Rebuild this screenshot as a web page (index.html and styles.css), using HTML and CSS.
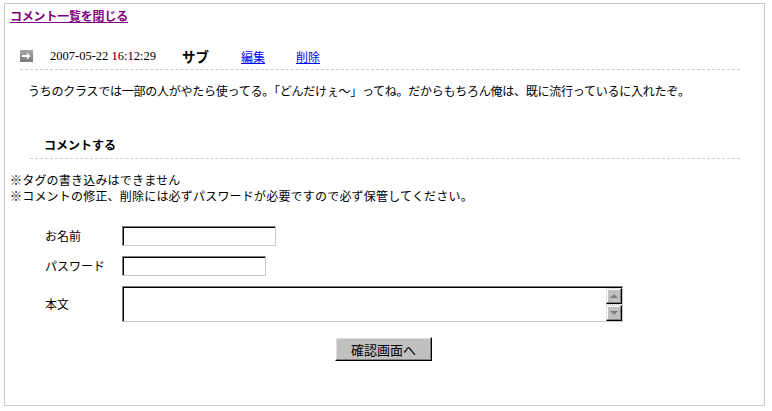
FILE: index.html
```html
<!DOCTYPE html>
<html lang="ja">
<head>
<meta charset="utf-8">
<title>コメント</title>
<link rel="stylesheet" href="styles.css">
</head>
<body>
<div class="frame">
  <div class="close"><a href="#" class="close-link">コメント一覧を閉じる</a></div>

  <div class="entry">
    <div class="entry-head">
      <svg class="icon" width="13" height="12" viewBox="0 0 13 12">
        <defs>
          <linearGradient id="g" x1="0" y1="0" x2="0" y2="1">
            <stop offset="0" stop-color="#a8a8a8"/>
            <stop offset="1" stop-color="#7a7a7a"/>
          </linearGradient>
        </defs>
        <rect x="0" y="0" width="13" height="12" fill="url(#g)"/>
        <path d="M2 5 H7 V2.5 L10.5 6 L7 9.5 V7 H2 Z" fill="#fff"/>
      </svg>
      <span class="date">2007-05-22 16:12:29</span>
      <span class="name">サブ</span>
      <a href="#" class="act">編集</a>
      <a href="#" class="act">削除</a>
    </div>
    <div class="entry-body">うちのクラスでは一部の人がやたら使ってる。「どんだけぇ〜」ってね。だからもちろん俺は、既に流行っているに入れたぞ。</div>
  </div>

  <div class="comment-sec">
    <div class="comment-title">コメントする</div>
  </div>

  <div class="notes">
    <div>※タグの書き込みはできません</div>
    <div>※コメントの修正、削除には必ずパスワードが必要ですので必ず保管してください。</div>
  </div>

  <form class="form">
    <div class="grid">
      <label class="lbl" for="n">お名前</label>
      <input id="n" class="txt txt-name" type="text">
      <label class="lbl" for="p">パスワード</label>
      <input id="p" class="txt txt-pw" type="password">
      <label class="lbl" for="b">本文</label>
      <div class="ta-wrap">
        <textarea id="b" class="ta"></textarea>
        <div class="sb">
          <div class="sb-btn"><span class="arr arr-up"></span></div>
          <div class="sb-track"></div>
          <div class="sb-btn"><span class="arr arr-down"></span></div>
        </div>
      </div>
    </div>
    <div class="submit-row">
      <button type="button" class="btn">確認画面へ</button>
    </div>
  </form>
</div>
</body>
</html>
```
FILE: styles.css
```css
html, body {
  margin: 0;
  padding: 0;
  background: #fff;
}
body {
  font-family: "Noto Sans CJK JP", "Noto Sans", sans-serif;
  font-size: 12px;
  color: #000;
}
.frame {
  margin: 3px 0 0 4px;
  width: 761px;
  height: 403px;
  box-sizing: border-box;
  border: 1px solid #c8c8c8;
  padding-left: 5px;
}
.close {
  margin-top: 5px;
  line-height: 14px;
}
.close-link {
  color: #800080;
  font-weight: bold;
  text-decoration: underline;
  letter-spacing: -0.2px;
}
.entry {
  margin: 20px 0 0 10px;
  width: 720px;
}
.entry-head {
  display: flex;
  align-items: center;
  height: 26px;
  border-bottom: 1px dashed #cccccc;
}
.icon {
  display: block;
  margin-right: 17px;
}
.date {
  width: 132px;
  font-family: "Liberation Serif", serif;
  font-size: 12.5px;
}
.name {
  width: 59px;
  font-weight: bold;
  font-size: 13.5px;
}
.act {
  width: 55px;
  color: #0000ff;
  text-decoration: underline;
}
.entry-body {
  padding: 14px 0 0 8px;
  line-height: 14px;
  letter-spacing: -0.25px;
}
.comment-sec {
  margin: 40px 0 0 20px;
  width: 710px;
}
.comment-title {
  padding: 0 0 6px 14px;
  line-height: 14px;
  font-weight: bold;
  border-bottom: 1px dashed #cccccc;
}
.notes {
  margin-top: 13px;
  line-height: 16px;
  letter-spacing: 0.2px;
}
.form {
  margin: 22px 0 0 0;
}
.grid {
  margin-left: 35px;
  display: grid;
  grid-template-columns: 77px auto;
  row-gap: 10px;
  justify-content: start;
}
.lbl {
  align-self: center;
  line-height: 14px;
}
.txt {
  box-sizing: border-box;
  height: 20px;
  margin: 0;
  padding: 1px 2px;
  border: 1px solid;
  border-color: #808080 #c8c8c8 #c8c8c8 #808080;
  box-shadow: inset 1px 1px 0 #000;
  background: #fff;
  font: inherit;
  outline: none;
}
.txt-name { width: 154px; }
.txt-pw { width: 144px; }
.ta-wrap {
  box-sizing: border-box;
  width: 501px;
  height: 36px;
  display: flex;
  border: 1px solid;
  border-color: #808080 #c8c8c8 #c8c8c8 #808080;
  box-shadow: inset 1px 1px 0 #000;
  padding: 1px 0 0 1px;
  background: #fff;
}
.ta {
  flex: 1;
  border: none;
  margin: 0;
  padding: 2px;
  resize: none;
  outline: none;
  overflow: hidden;
  font: inherit;
  background: transparent;
}
.sb {
  width: 16px;
  display: flex;
  flex-direction: column;
}
.sb-btn {
  box-sizing: border-box;
  height: 16px;
  background: #c0c0c0;
  border: 1px solid;
  border-color: #dfdfdf #000 #000 #dfdfdf;
  box-shadow: inset -1px -1px 0 #808080, inset 1px 1px 0 #fff;
  display: flex;
  align-items: center;
  justify-content: center;
}
.sb-track {
  flex: 1;
  background-image: repeating-linear-gradient(90deg, #c0c0c0 0 1px, #fff 1px 2px);
}
.arr {
  width: 0;
  height: 0;
  border-left: 4px solid transparent;
  border-right: 4px solid transparent;
}
.arr-up { border-bottom: 4px solid #808080; }
.arr-down { border-top: 4px solid #808080; }
.submit-row {
  display: flex;
  justify-content: center;
  padding-right: 7px;
  margin-top: 15px;
}
.btn {
  box-sizing: border-box;
  width: 97px;
  height: 24px;
  margin: 0;
  padding: 0;
  background: #c0c0c0;
  border: 1px solid;
  border-color: #fff #000 #000 #fff;
  box-shadow: inset -1px -1px 0 #808080, inset 1px 1px 0 #dfdfdf;
  font: inherit;
  font-size: 13px;
  color: #000;
}
```
